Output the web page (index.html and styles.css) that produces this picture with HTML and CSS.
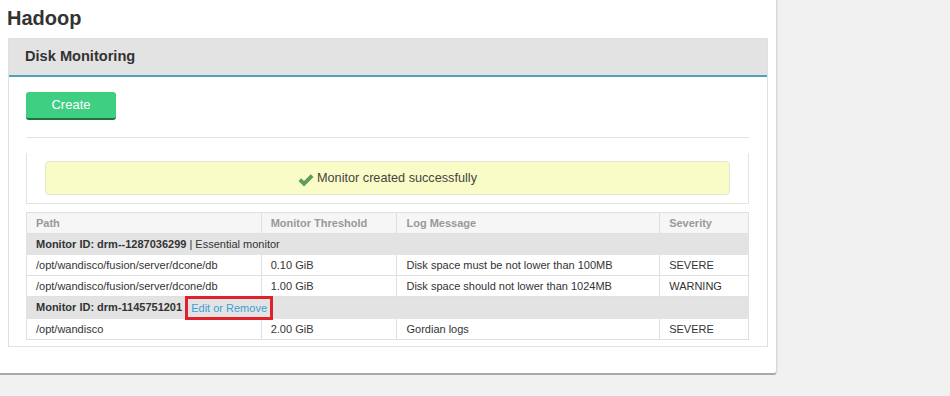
FILE: index.html
```html
<!DOCTYPE html>
<html>
<head>
<meta charset="utf-8">
<link rel="stylesheet" href="styles.css">
</head>
<body>
<div class="page">
  <h1 class="title">Hadoop</h1>
  <div class="panel">
    <div class="panel-head">Disk Monitoring</div>
    <div class="panel-body">
      <button class="btn-create">Create</button>
      <div class="rule"></div>
      <div class="alert-wrap">
        <div class="alert">
          <svg class="check" width="16" height="14" viewBox="0 0 16 14"><path d="M0.5 8 L3.2 5.3 L6 8.1 L12.8 1.3 L15.5 4 L6 13.5 Z" fill="#5c9c5c"/></svg>
          <span>Monitor created successfully</span>
        </div>
      </div>
      <table class="grid">
        <colgroup>
          <col class="c-path"><col class="c-thr"><col class="c-log"><col class="c-sev">
        </colgroup>
        <thead>
          <tr><th>Path</th><th>Monitor Threshold</th><th>Log Message</th><th>Severity</th></tr>
        </thead>
        <tbody>
          <tr class="group"><td colspan="4"><b>Monitor ID: drm--1287036299</b> | Essential monitor</td></tr>
          <tr><td>/opt/wandisco/fusion/server/dcone/db</td><td>0.10 GiB</td><td>Disk space must be not lower than 100MB</td><td>SEVERE</td></tr>
          <tr><td>/opt/wandisco/fusion/server/dcone/db</td><td>1.00 GiB</td><td>Disk space should not lower than 1024MB</td><td>WARNING</td></tr>
          <tr class="group"><td colspan="4"><b>Monitor ID: drm-1145751201</b> <span class="hl"><a class="link">Edit or Remove</a></span></td></tr>
          <tr><td>/opt/wandisco</td><td>2.00 GiB</td><td>Gordian logs</td><td>SEVERE</td></tr>
        </tbody>
      </table>
    </div>
  </div>
</div>
</body>
</html>
```

FILE: styles.css
```css
html, body {
  margin: 0;
  padding: 0;
  background: #f1f1f1;
  font-family: "Liberation Sans", Arial, sans-serif;
  color: #333;
}
.page {
  width: 777px;
  height: 375px;
  box-sizing: border-box;
  background: #fff;
  border-right: 1px solid #d8d8d8;
  border-bottom: 2px solid #a9a9a9;
  border-bottom-right-radius: 4px;
  padding: 7px 0 0 8px;
  box-shadow: 1px 0 0 #e6e6e6;
}
.title {
  margin: 0 0 0 -1px;
  font-size: 20px;
  line-height: 22px;
  font-weight: bold;
  color: #333;
}
.panel {
  margin-top: 9px;
  width: 760px;
  box-sizing: border-box;
  border: 1px solid #e0e0e0;
}
.panel-head {
  height: 36px;
  line-height: 35px;
  background: #e3e3e3;
  border-bottom: 2px solid #4ea3bd;
  padding-left: 16px;
  font-size: 14.6px;
  font-weight: bold;
  color: #333;
}
.panel-body {
  padding: 15px 18px 6px 17px;
}
.btn-create {
  display: block;
  width: 90px;
  height: 28px;
  border: 0;
  border-bottom: 2px solid #1f7043;
  border-radius: 3px;
  background: #3ecf82;
  color: #fff;
  font-family: "Liberation Sans", Arial, sans-serif;
  font-size: 13px;
  padding: 0;
  line-height: 26px;
}
.rule {
  margin-top: 17px;
  height: 1px;
  background: #e3e3e3;
}
.alert-wrap {
  margin-top: 15px;
  border: 1px solid #e3e3e3;
  border-top: 0;
  padding: 8px 18px 8px 18px;
}
.alert {
  height: 34px;
  box-sizing: border-box;
  background: #fafcc8;
  border: 1px solid #e6e6cc;
  border-radius: 4px;
  display: flex;
  align-items: center;
  justify-content: center;
  gap: 3px;
  font-size: 12.7px;
  color: #444;
}
.check { margin-top: 3px; }
.grid {
  margin-top: 8px;
  width: 723px;
  border-collapse: collapse;
  font-size: 11px;
}
.c-path { width: 235px; }
.c-thr { width: 136px; }
.c-log { width: 263px; }
.c-sev { width: 89px; }
.grid th, .grid td {
  border: 1px solid #e0e0e0;
  height: 20px;
  padding: 0 0 0 9px;
  text-align: left;
  line-height: 20px;
  white-space: nowrap;
}
.grid th {
  background: #f6f6f6;
  color: #999;
  font-weight: bold;
}
.grid td { color: #333; }
.grid tr.group td {
  background: #e3e3e3;
  border-color: #e3e3e3;
}
.grid tr.group b { color: #333; }
.hl {
  display: inline-block;
  border: 3px solid #e2202c;
  padding: 0 3px 0 3px;
  margin-left: 0;
  line-height: 18px;
  vertical-align: middle;
  margin-top: -3px;
  margin-bottom: -2px;
}
.link { color: #3b9fd8; }
```
